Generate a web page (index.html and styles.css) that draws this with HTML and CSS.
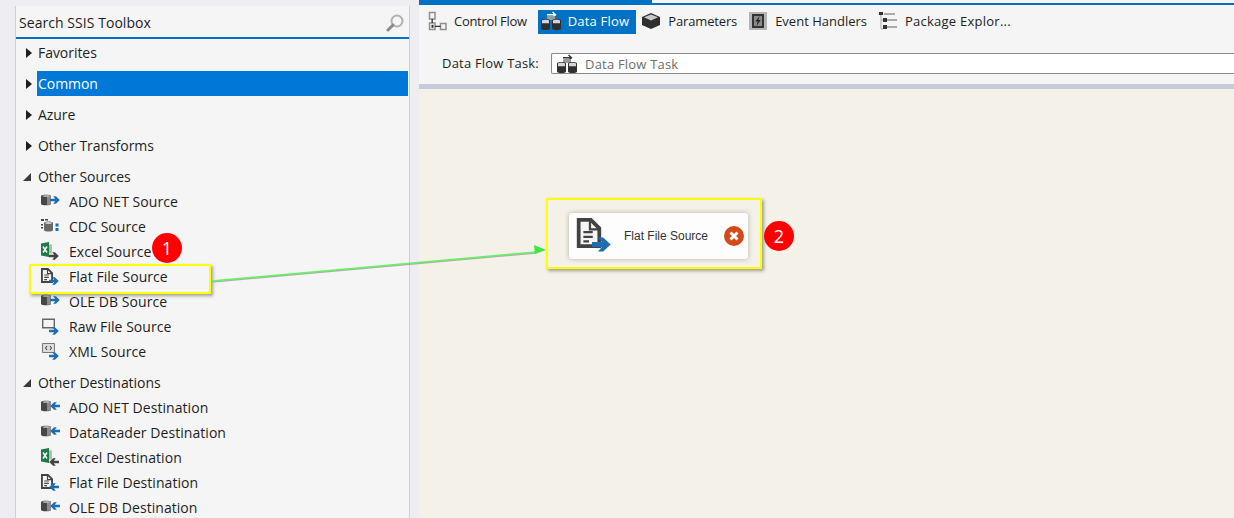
FILE: index.html
```html
<!DOCTYPE html>
<html lang="en">
<head>
  <meta charset="UTF-8" />
  <title>SSIS Data Flow</title>
  <link rel="stylesheet" href="styles.css">
</head>
<body>
  <svg class="defs" width="0" height="0">
    <symbol id="arrow-out" viewBox="0 0 10 10"><path d="M0 3.700h5.200L3.200 1.300h2.700L9.800 5 5.900 8.700H3.200L5.200 6.300H0z" fill="#1c6db3"/></symbol>
    <symbol id="arrow-in" viewBox="0 0 10 10"><path d="M10 3.700H4.800L6.800 1.300H4.100L.2 5l3.900 3.700h2.700L4.800 6.300H10z" fill="#1c6db3"/></symbol>
    <symbol id="arrow-dark" viewBox="0 0 10 10"><path d="M0 3.700h5.200L3.200 1.300h2.700L9.800 5 5.900 8.700H3.200L5.200 6.300H0z" fill="#444"/></symbol>
    <symbol id="arrow-dark-in" viewBox="0 0 10 10"><path d="M10 3.700H4.800L6.800 1.300H4.100L.2 5l3.900 3.700h2.700L4.800 6.300H10z" fill="#444"/></symbol>
    <symbol id="db" viewBox="0 0 10 12"><path d="M0 2C0 .2 10 .2 10 2v8c0 1.800-10 1.800-10 0z" fill="#474747"/><path d="M6 1.200c3 0 4 .4 4 .8v8c0 .5-1 .8-4 1z" fill="#8c8c8c"/><ellipse cx="5" cy="2" rx="3.500" ry=".8" fill="#c9c9c9"/></symbol>
    <symbol id="file" viewBox="0 0 13 16"><path d="M1 1h6.500L12 5.500V15H1z" fill="#f5f5f5" stroke="#424242" stroke-width="2"/><path d="M7 1v5h5" fill="none" stroke="#424242" stroke-width="1.200"/><path d="M3.500 7.500h5M3.500 10h5M3.500 12.500h3" stroke="#424242" stroke-width="1.200"/></symbol>
    <symbol id="excel" viewBox="0 0 11 15"><path d="M0 1.500 8 0v15L0 13.500z" fill="#1e7a45"/><path d="M2 4.500 6 10.500M6 4.500l-4 6" stroke="#fff" stroke-width="1.500"/><path d="M8 2.500h3v9H8z" fill="#9cc7ab"/></symbol>
    <symbol id="flow" viewBox="0 0 20 20"><g fill="#f5f5f5" stroke="#8f8f8f" stroke-width="1.500"><path d="M2.500 1.500h5.500v6.500H2.500zM2.500 12h5.500v6.500H2.500zM13.500 12.500h5.500v6H13.500z"/></g><path d="M5.200 8v4M8 15.300h5.500" stroke="#333" stroke-width="1.300"/><path d="M4.500 13.800h2v3h-2z" fill="#333"/></symbol>
    <symbol id="dbs" viewBox="0 0 20 20"><path d="M6 3h6.500L11 1.300 12 .5l3.500 3.200L12 7l-1-.8L12.500 4.500H6z" fill="currentColor"/><path d="M6 5.500c0-1 8-1 8 0V9H6z" fill="#9a9a9a"/><g fill="#2f2f2f"><path d="M0 9.500c0-2 9-2 9 0v8c0 2-9 2-9 0z"/><path d="M11 9.500c0-2 9-2 9 0v8c0 2-9 2-9 0z"/></g><path d="M1 9.800c0-1.300 7-1.300 7 0v2.500H1zM12 9.800c0-1.300 7-1.300 7 0v2.500h-7z" fill="#d6d6d6"/></symbol>
    <symbol id="params" viewBox="0 0 20 20"><path d="M10 2 19 6v8l-9 4-9-4V6z" fill="#2f2f2f"/><path d="M10 3.500 17 6.300 10 9.500 3 6.300z" fill="#c9c9c9"/></symbol>
    <symbol id="events" viewBox="0 0 20 20"><path d="M1 1h18v18H1z" fill="#b5b5b5"/><path d="M4 3h12v14H4z" fill="#333"/><path d="M6 5h8v10H6z" fill="#8a8a8a"/><path d="M11.500 5 7.500 10.500h2.200L8.500 15l4.200-6h-2.300z" fill="#222"/></symbol>
    <symbol id="explorer" viewBox="0 0 20 20"><path d="M1 1h4v3H1z" fill="#333"/><path d="M6 2h11v2H6zM9 8h10v2H9zM9 15h10v2H9z" fill="#aaa"/><path d="M5 7h4v4H5zM5 14h4v4H5z" fill="#333"/><path d="M3 4v14h2M3 9h2" stroke="#aaa" fill="none"/></symbol>
    <symbol id="raw" viewBox="0 0 13 10"><path d="M.7.7h11.600v8.600H.7z" fill="#f5f5f5" stroke="#666" stroke-width="1.400"/></symbol>
    <symbol id="xml" viewBox="0 0 13 11"><path d="M.5.5h12v9H.5z" fill="#ddd" stroke="#777"/><path d="M5 3 3.500 5 5 7M8 3l1.500 2L8 7" stroke="#333" fill="none"/></symbol>
    <symbol id="cdc" viewBox="0 0 18 14"><path d="M3 5c0-2 9-2 9 0v7c0 2-9 2-9 0z" fill="#6a6a6a"/><ellipse cx="7.500" cy="5" rx="3.300" ry="1" fill="#ccc"/><path d="M0 1h3v2H0zM4 1h3v1.500H4zM0 6h2v1.500H0zM0 9h2v1.500H0z" fill="#444"/><path d="M14.500 5.500h3v3h-3zM14.500 10h3v3h-3z" fill="#1c6db3"/></symbol>
  </svg>

  <div class="app">
    <aside class="toolbox">
      <div class="search">
        <span>Search SSIS Toolbox</span>
        <svg class="search-icon" width="18" height="18" viewBox="0 0 18 18"><circle cx="11" cy="7" r="5.500" fill="none" stroke="#b0b0b0" stroke-width="2"/><path d="M7 11 2 16" stroke="#8a8a8a" stroke-width="3" stroke-linecap="round"/></svg>
      </div>

      <div class="group"><div class="group-head"><i class="caret"></i><span class="group-name">Favorites</span></div></div>
      <div class="group"><div class="group-head"><i class="caret"></i><span class="group-name selected">Common</span></div></div>
      <div class="group"><div class="group-head"><i class="caret"></i><span class="group-name">Azure</span></div></div>
      <div class="group"><div class="group-head"><i class="caret"></i><span class="group-name">Other Transforms</span></div></div>

      <div class="group">
        <div class="group-head"><i class="caret open"></i><span class="group-name">Other Sources</span></div>
        <div class="item"><span class="item-icon"><svg class="base db"><use href="#db"/></svg><svg class="over"><use href="#arrow-out"/></svg></span>ADO NET Source</div>
        <div class="item"><span class="item-icon"><svg class="base cdc"><use href="#cdc"/></svg></span>CDC Source</div>
        <div class="item"><span class="item-icon"><svg class="base excel"><use href="#excel"/></svg><svg class="over low"><use href="#arrow-dark"/></svg></span>Excel Source</div>
        <div class="item"><span class="item-icon"><svg class="base file"><use href="#file"/></svg><svg class="over low"><use href="#arrow-out"/></svg></span>Flat File Source</div>
        <div class="item"><span class="item-icon"><svg class="base db"><use href="#db"/></svg><svg class="over"><use href="#arrow-out"/></svg></span>OLE DB Source</div>
        <div class="item"><span class="item-icon"><svg class="base box"><use href="#raw"/></svg><svg class="over low"><use href="#arrow-out"/></svg></span>Raw File Source</div>
        <div class="item"><span class="item-icon"><svg class="base box"><use href="#xml"/></svg><svg class="over low"><use href="#arrow-out"/></svg></span>XML Source</div>
      </div>

      <div class="group">
        <div class="group-head"><i class="caret open"></i><span class="group-name">Other Destinations</span></div>
        <div class="item"><span class="item-icon"><svg class="base db"><use href="#db"/></svg><svg class="over"><use href="#arrow-in"/></svg></span>ADO NET Destination</div>
        <div class="item"><span class="item-icon"><svg class="base db"><use href="#db"/></svg><svg class="over"><use href="#arrow-in"/></svg></span>DataReader Destination</div>
        <div class="item"><span class="item-icon"><svg class="base excel"><use href="#excel"/></svg><svg class="over low"><use href="#arrow-dark-in"/></svg></span>Excel Destination</div>
        <div class="item"><span class="item-icon"><svg class="base file"><use href="#file"/></svg><svg class="over low"><use href="#arrow-in"/></svg></span>Flat File Destination</div>
        <div class="item"><span class="item-icon"><svg class="base db"><use href="#db"/></svg><svg class="over"><use href="#arrow-in"/></svg></span>OLE DB Destination</div>
      </div>
    </aside>

    <main class="designer">
      <div class="tab-line"><div class="tab-line-on"></div></div>
      <div class="tabs">
        <div class="tab tab-first"><svg class="tab-icon"><use href="#flow"/></svg>Control Flow</div>
        <div class="tab active"><svg class="tab-icon"><use href="#dbs"/></svg>Data Flow</div>
        <div class="tab tab-params"><svg class="tab-icon"><use href="#params"/></svg>Parameters</div>
        <div class="tab"><svg class="tab-icon"><use href="#events"/></svg>Event Handlers</div>
        <div class="tab tab-last"><svg class="tab-icon"><use href="#explorer"/></svg>Package Explor...</div>
      </div>
      <div class="task-row">
        <label>Data Flow Task:</label>
        <div class="task-select"><svg class="tab-icon"><use href="#dbs"/></svg>Data Flow Task</div>
      </div>
      <div class="canvas">
        <div class="node">
          <svg class="node-file"><use href="#file"/></svg>
          <svg class="node-arrow"><use href="#arrow-out"/></svg>
          <span class="node-name">Flat File Source</span>
          <svg class="node-error" viewBox="0 0 20 20"><circle cx="10" cy="10" r="10" fill="#d2491a"/><path d="M6.500 6.500l7 7M13.500 6.500l-7 7" stroke="#fff" stroke-width="3"/></svg>
        </div>
      </div>
    </main>
  </div>

  <!-- annotations drawn over the screenshot -->
  <div class="mark box-a"></div>
  <div class="mark box-b"></div>
  <svg class="link" width="1234" height="518">
    <path d="M212 282 536 253" stroke="#b0b0a6" stroke-width="1.500"/>
    <path d="M212 281 536 252" stroke="#62f262" stroke-width="1.500"/>
    <path d="M546 250 534 245 535 254z" fill="#3fe83f"/>
  </svg>
  <div class="badge badge-a">1</div>
  <div class="badge badge-b">2</div>
</body>
</html>
```

FILE: styles.css
```css
* {
  box-sizing: border-box;
}

body {
  margin: 0;
  height: 518px;
  overflow: hidden;
  background: #eeeef2;
  font-family: "Open Sans", "Noto Sans", sans-serif;
  font-size: 14px;
  color: #1e1e1e;
  position: relative;
}

.defs {
  position: absolute;
}

.app {
  display: flex;
  height: 518px;
  padding-left: 15px;
}

/* toolbox */
.toolbox {
  width: 395px;
  margin-top: 6px;
  background: #f5f5f5;
  border-left: 1px solid #ccd0dd;
  border-right: 1px solid #ccd0dd;
  overflow: hidden;
  flex-shrink: 0;
}

.search {
  height: 33px;
  display: flex;
  align-items: center;
  justify-content: space-between;
  padding: 2px 5px 0 3px;
  border-bottom: 2px solid #0072c6;
  margin-bottom: 1px;
  letter-spacing: 0.05px;
}

.group {
  margin-bottom: 6px;
}

.group-head {
  display: flex;
  align-items: center;
  height: 25px;
}

.caret {
  width: 0;
  height: 0;
  margin: 0 5px 0 10px;
  border-left: 6px solid #1e1e1e;
  border-top: 5px solid transparent;
  border-bottom: 5px solid transparent;
}

.caret.open {
  margin: 0 6px 0 7px;
  border-left: 8px solid transparent;
  border-top: 0;
  border-bottom: 8px solid #3a3a3a;
}

.group-name {
  flex: 1;
  height: 25px;
  line-height: 26px;
  padding-left: 1px;
  letter-spacing: -0.05px;
}

.group-name.selected {
  background: #0078d7;
  color: #fff;
  margin-right: 1px;
}

.item {
  display: flex;
  align-items: center;
  height: 25px;
  padding-left: 25px;
  padding-bottom: 1px;
  letter-spacing: 0.05px;
}

.item-icon {
  position: relative;
  width: 28px;
  height: 18px;
  flex-shrink: 0;
}

.base {
  position: absolute;
  left: 0;
  top: 2px;
}

.base.db {
  width: 10px;
  height: 12px;
}

.base.cdc {
  width: 18px;
  height: 14px;
  top: 1px;
}

.base.excel {
  width: 11px;
  height: 15px;
  top: 0;
}

.base.file {
  width: 12px;
  height: 15px;
  top: 1px;
}

.base.box {
  width: 13px;
  height: 11px;
  left: 1px;
  top: 1px;
}

.over {
  position: absolute;
  left: 9px;
  top: 3px;
  width: 10px;
  height: 10px;
}

.over.low {
  left: 8px;
  top: 9px;
}

/* designer */
.designer {
  flex: 1;
  margin-left: 9px;
  display: flex;
  flex-direction: column;
  background: #f5f5f5;
  min-width: 0;
  font-size: 13px;
}

.tab-line {
  height: 5px;
  border-bottom: 2px solid #0072c6;
  flex-shrink: 0;
}

.tab-line-on {
  width: 233px;
  height: 5px;
  background: #0072c6;
}

.tabs {
  display: flex;
  align-items: center;
  height: 24px;
  margin-top: 5px;
  padding-left: 8px;
}

.tab {
  display: flex;
  align-items: center;
  height: 24px;
  padding: 0 5px 2px;
  margin-right: 1px;
  white-space: nowrap;
}

.tab-first {
  padding-left: 0;
  padding-right: 0;
  margin-right: 11px;
  letter-spacing: -0.3px;
}

.tab.active {
  background: #0072c6;
  color: #fff;
  padding: 0 7px 2px 3px;
  margin-right: 0;
  letter-spacing: 0.2px;
}

.tab-params {
  letter-spacing: -0.15px;
}

.tab-last {
  letter-spacing: 0.25px;
}

.tab-icon {
  width: 20px;
  height: 20px;
  margin-right: 7px;
  color: #333;
  flex-shrink: 0;
}

.tab.active .tab-icon {
  color: #fff;
}

.task-row {
  display: flex;
  align-items: center;
  height: 21px;
  margin-top: 19px;
  padding-left: 23px;
  letter-spacing: 0.2px;
}

.task-row label {
  width: 109px;
  padding-bottom: 1px;
}

.task-select {
  flex: 1;
  height: 21px;
  display: flex;
  align-items: center;
  padding: 0 0 0 5px;
  background: #fff;
  border: 1px solid #8a8a8a;
  border-right: 0;
  border-radius: 2px 0 0 2px;
  color: #6d6d6d;
}

.task-select .tab-icon {
  margin-right: 8px;
}

.canvas {
  flex: 1;
  margin-top: 10px;
  background: #f4f1e9;
  border-top: 5px solid #c6cbda;
  position: relative;
}

.node {
  position: absolute;
  left: 150px;
  top: 124px;
  width: 179px;
  height: 46px;
  background: #fdfdfe;
  border-radius: 3px;
  box-shadow: 0 0 5px rgba(90, 80, 60, 0.4);
  color: #333;
  font-family: "Liberation Sans", sans-serif;
  font-size: 12px;
}

.node-file {
  position: absolute;
  left: 7px;
  top: 5px;
  width: 26px;
  height: 30px;
}

.node-arrow {
  position: absolute;
  left: 23px;
  top: 22px;
  width: 19px;
  height: 19px;
}

.node-name {
  position: absolute;
  left: 55px;
  top: 16px;
}

.node-error {
  position: absolute;
  left: 155px;
  top: 13px;
  width: 20px;
  height: 20px;
}

/* annotations */
.mark {
  position: absolute;
  border: 2px solid #ffff00;
  box-shadow: 2px 2px 3px rgba(80, 80, 60, 0.5);
}

.box-a {
  left: 29px;
  top: 264px;
  width: 182px;
  height: 30px;
}

.box-b {
  left: 546px;
  top: 198px;
  width: 216px;
  height: 71px;
}

.link {
  position: absolute;
  left: 0;
  top: 0;
}

.badge {
  position: absolute;
  width: 30px;
  height: 30px;
  border-radius: 50%;
  background: #ff0000;
  color: #fff;
  font-size: 18px;
  line-height: 30px;
  text-align: center;
}

.badge-a {
  left: 152px;
  top: 233px;
}

.badge-b {
  left: 764px;
  top: 221px;
}
```
